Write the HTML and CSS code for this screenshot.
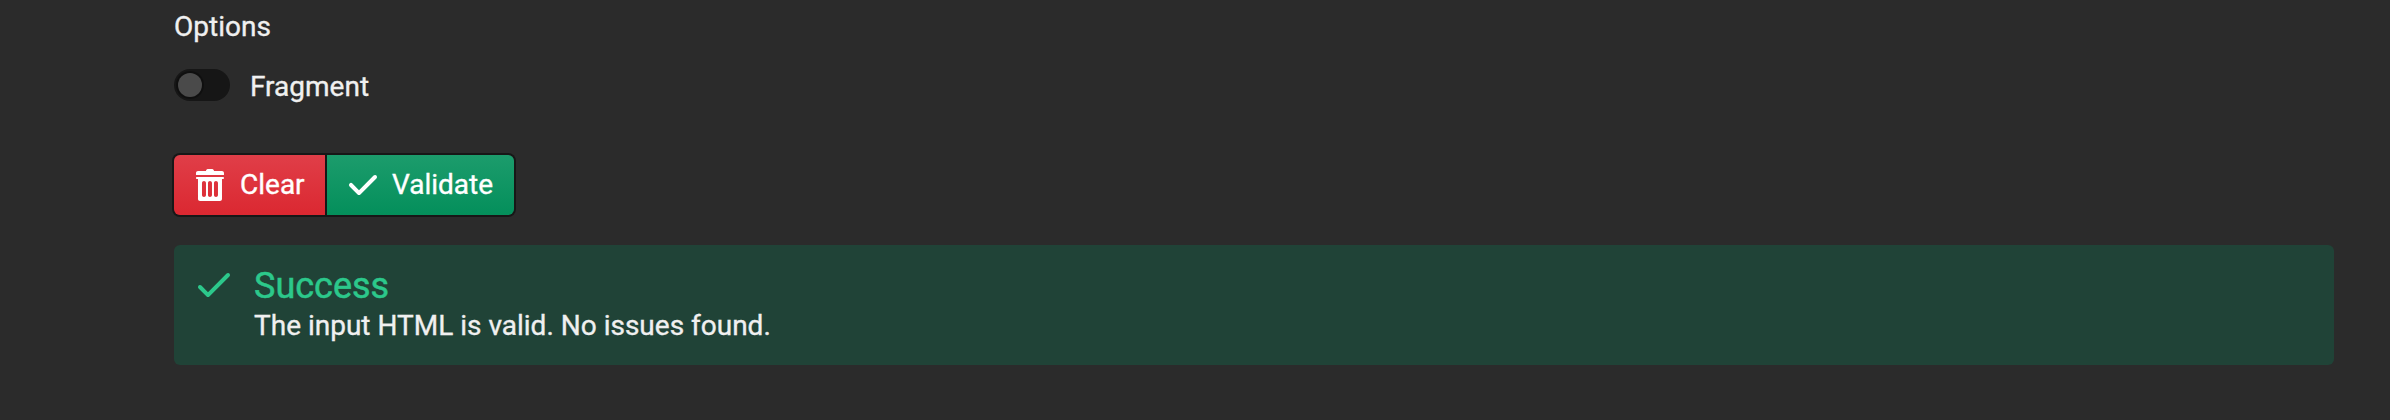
FILE: index.html
```
<!DOCTYPE html>
<html lang="en">
<head>
<meta charset="utf-8">
<title>HTML Validator</title>
<link rel="stylesheet" href="styles.css">
</head>
<body>
<main class="page">
  <div class="label">Options</div>
  <label class="switch"><span class="track"><span class="knob"></span></span><span>Fragment</span></label>
  <div class="buttons">
    <button class="btn danger" type="button">
      <svg class="icon" viewBox="0 0 16 16"><path fill-rule="evenodd" d="M14.49 3.99h-13c-.28 0-.5.22-.5.5s.22.5.5.5h.5v10c0 .55.45 1 1 1h10c.55 0 1-.45 1-1v-10h.5c.28 0 .5-.22.5-.5s-.22-.5-.5-.5zm-8.5 9c0 .55-.45 1-1 1s-1-.45-1-1v-6c0-.55.45-1 1-1s1 .45 1 1v6zm3 0c0 .55-.45 1-1 1s-1-.45-1-1v-6c0-.55.45-1 1-1s1 .45 1 1v6zm3 0c0 .55-.45 1-1 1s-1-.45-1-1v-6c0-.55.45-1 1-1s1 .45 1 1v6zm2-12h-4c0-.55-.45-1-1-1h-2c-.55 0-1 .45-1 1h-4c-.55 0-1 .45-1 1v1h14v-1c0-.55-.45-1-1-1z"/></svg>
      <span>Clear</span>
    </button>
    <button class="btn success" type="button">
      <svg class="icon" viewBox="0 0 16 16"><path d="M14 3c-.28 0-.53.11-.71.29L6 10.59l-3.29-3.3a1.003 1.003 0 00-1.42 1.42l4 4c.18.18.43.29.71.29s.53-.11.71-.29l8-8A1.003 1.003 0 0014 3z"/></svg>
      <span>Validate</span>
    </button>
  </div>
  <section class="callout">
    <svg class="callout-icon" viewBox="0 0 20 20"><path d="M17 4c-.28 0-.53.11-.71.29L7 13.59 3.71 10.3A.965.965 0 003 10a1.003 1.003 0 00-.71 1.71l4 4c.18.18.43.29.71.29s.53-.11.71-.29l10-10A1.003 1.003 0 0017 4z"/></svg>
    <div>
      <h4 class="heading">Success</h4>
      <p class="message">The input HTML is valid. No issues found.</p>
    </div>
  </section>
</main>
</body>
</html>
```
FILE: styles.css
```
* { box-sizing: border-box; }
body {
  margin: 0;
  height: 420px;
  overflow: hidden;
  background: #2b2b2b;
  color: #f0f0f0;
  font: 28px/37px Roboto, sans-serif;
  -webkit-text-stroke: .35px currentColor;
}
.page { padding: 8px 56px 0 174px; }
.switch {
  display: flex;
  align-items: center;
  gap: 20px;
  height: 37px;
  margin-top: 23px;
}
.track {
  display: flex;
  align-items: center;
  width: 56px;
  height: 32px;
  padding: 4px;
  margin-top: -3px;
  border-radius: 16px;
  background: #161616;
}
.knob {
  width: 24px;
  height: 24px;
  border-radius: 50%;
  background: #4a4a4a;
  box-shadow: 0 0 0 2px rgba(0, 0, 0, .3);
}
.buttons { display: flex; gap: 2px; margin-top: 50px; }
.btn {
  display: flex;
  align-items: center;
  gap: 14px;
  height: 60px;
  padding: 0 20px;
  border: 0;
  color: #fff;
  font: inherit;
  line-height: 36px;
  box-shadow: 0 0 0 2px #171717;
}
.danger {
  width: 151px;
  border-radius: 6px 0 0 6px;
  background: linear-gradient(#e03e48, #db2831);
}
.success {
  gap: 13px;
  width: 187px;
  border-radius: 0 6px 6px 0;
  background: linear-gradient(#1c9c6c, #048f5b);
}
.icon { width: 32px; height: 32px; flex: none; fill: #fff; }
.icon, .callout-icon { -webkit-text-stroke: 0; }
.callout {
  display: flex;
  gap: 20px;
  height: 120px;
  margin-top: 30px;
  padding: 20px;
  border-radius: 6px;
  background: #204337;
}
.callout-icon { width: 40px; height: 40px; flex: none; fill: #2cc88b; }
.heading { margin: 0; color: #2cc88b; font-size: 36px; font-weight: 400; line-height: 42px; -webkit-text-stroke: .5px #2cc88b; }
.message { margin: 0; }
```
